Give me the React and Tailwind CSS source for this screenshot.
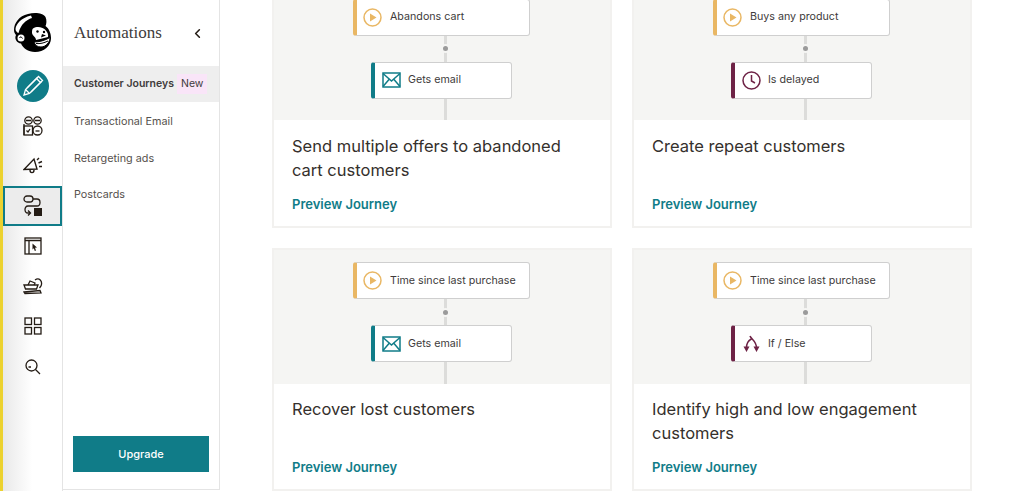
import { ChevronLeft } from 'lucide-react'

const SANS = 'font-[Inter,sans-serif]'

const Freddie = () => (
  <svg width="40" height="42" viewBox="14 12 40 42" aria-hidden>
    <path d="M15 30C15 23 20 16 29 14C36 12 44 13 46.500 17C48 20 47.500 24 46.500 26C50.500 29 52 34 52 38C52 46 45 52 36 52C29 52 24 48 22 43.500C18 43 15 39 17 35C15.500 33 15 32 15 30Z" fill="#000" />
    <path d="M16.500 29C17 24 22 18 32 15.500L33 18C27 20 22 24 19.500 33C18 32.500 16.500 31 16.500 29Z" fill="#fff" />
    <circle cx="22" cy="38" r="3.500" fill="#fff" />
    <path d="M23.500 38.500C22.500 36.500 21 36.500 20.500 38" fill="none" stroke="#000" strokeWidth="1" />
    <path d="M34 28.500C38 26 43 27 46 29.500C48.500 32 49.500 34.500 49 37L37 40C37 37 33.500 36 33 33C33 31 33 29.500 34 28.500Z" fill="#fff" />
    <circle cx="38.500" cy="31.500" r="1.200" fill="#000" />
    <circle cx="45" cy="32" r="1.200" fill="#000" />
    <path d="M43 34L47 35.500L42 37.500Z" fill="#000" />
    <path d="M35 42C40 42 46 40.500 51 37.500C51 42 47 47 42 47C38 47 36 45 35 42Z" fill="#fff" stroke="#000" strokeWidth="1" />
    <path d="M37 43.500C41 44 45 43 49 41" fill="none" stroke="#000" strokeWidth="1" />
  </svg>
)

const Pencil = () => (
  <svg width="24" height="24" viewBox="0 0 24 24" fill="none" stroke="#fff" strokeWidth="1.300" aria-hidden>
    <path d="M3 21L4.500 15.500L17.500 2.500L21.500 6.500L8.500 19.500Z" />
    <path d="M4.500 15.500L8.500 19.500M15.500 4.500L19.500 8.500M6 14L16.500 3.500M10 18L20.500 7.500" />
  </svg>
)

const Audience = () => (
  <svg width="20" height="20" viewBox="0 0 20 20" fill="none" stroke="#241c15" strokeWidth="1.300" aria-hidden>
    <circle cx="5.500" cy="4.500" r="3.700" />
    <circle cx="14.500" cy="4.500" r="3.700" />
    <path d="M3 4.500H8M12 4.500H17" />
    <rect x="1" y="10" width="8.500" height="9" />
    <path d="M1 8V19M3.500 14.500L5 16L7 13" />
    <circle cx="14.500" cy="14.500" r="4.500" />
    <path d="M12.500 15H16.500" />
  </svg>
)

const Megaphone = () => (
  <svg width="20" height="18" viewBox="0 0 20 18" fill="none" stroke="#241c15" strokeWidth="1.400" aria-hidden>
    <path d="M1 12.500L11 2L14 12Z" />
    <path d="M7 13C7 16.500 11 16.500 11 13" />
    <path d="M14 3L16 1M15.500 6L19 4.500M16 9.500L19 9.500" />
  </svg>
)

const JourneyIcon = () => (
  <svg width="20" height="22" viewBox="0 0 20 22" fill="none" stroke="#241c15" strokeWidth="1.300" aria-hidden>
    <rect x="1" y="1" width="9" height="6" rx="3" />
    <path d="M10 4H14C18 4 18 11 14 11H5C1 11 1 18 5 18H7" />
    <path d="M5 15.500L7.500 18L5 20.500" />
    <rect x="11" y="13" width="8" height="8" fill="#241c15" stroke="none" />
  </svg>
)

const Website = () => (
  <svg width="18" height="18" viewBox="0 0 18 18" fill="none" stroke="#241c15" strokeWidth="1.300" aria-hidden>
    <rect x="1" y="1" width="16" height="16" />
    <path d="M1 3.500H17M5 3.500V17" />
    <path d="M8.500 6.500L13 10.500L11 10.800L12 13.500L10.800 14L9.800 11.300L8.500 12.500Z" fill="#241c15" stroke="none" />
  </svg>
)

const Bowl = () => (
  <svg width="20" height="18" viewBox="0 0 20 18" fill="none" stroke="#241c15" strokeWidth="1.300" aria-hidden>
    <path d="M1 8H15L13.500 12H2.500Z" />
    <path d="M1 15L17 13.500L18 16L2 16.500Z" />
    <path d="M5 8L7 4L12 6L11 8" />
    <path d="M12 3C16 0 20 4 18 9L16.500 11" />
  </svg>
)

const Grid = () => (
  <svg width="18" height="18" viewBox="0 0 18 18" fill="none" stroke="#241c15" strokeWidth="1.300" aria-hidden>
    <rect x="1" y="1" width="6.500" height="6.500" />
    <rect x="10.500" y="1" width="6.500" height="6.500" />
    <rect x="1" y="10.500" width="6.500" height="6.500" />
    <rect x="10.500" y="10.500" width="6.500" height="6.500" />
  </svg>
)

const Search = () => (
  <svg width="16" height="16" viewBox="0 0 16 16" className="mt-[1px]" fill="none" stroke="#241c15" strokeWidth="1.300" aria-hidden>
    <circle cx="6.500" cy="6.500" r="5.500" />
    <path d="M10.500 10.500L15 15M3.500 8H6" />
  </svg>
)

const Play = () => (
  <svg width="19" height="19" viewBox="0 0 19 19" fill="none" aria-hidden>
    <circle cx="9.500" cy="9.500" r="8.500" stroke="#e9b764" strokeWidth="1.500" />
    <path d="M7 5.500L13.500 9.500L7 13.500Z" fill="#e9b764" />
  </svg>
)

const Mail = () => (
  <svg width="19" height="16" viewBox="0 0 19 16" fill="none" stroke="#107c88" strokeWidth="1.500" aria-hidden>
    <rect x="1" y="1" width="17" height="14" />
    <path d="M1 1.500L9.500 9L18 1.500M1 14.500L7 7.500M18 14.500L12 7.500" />
  </svg>
)

const Clock = () => (
  <svg width="19" height="19" viewBox="0 0 19 19" fill="none" stroke="#6e2346" strokeWidth="1.500" aria-hidden>
    <circle cx="9.500" cy="9.500" r="8.500" />
    <path d="M9.500 4V10L13 12" />
  </svg>
)

const Branch = () => (
  <svg width="17" height="18" viewBox="0 0 17 18" fill="none" stroke="#6e2346" strokeWidth="1.500" aria-hidden>
    <path d="M7 1C8 4 13.500 6 13.500 13M9 3.500C5 6 3.500 8 3.500 13" />
    <path d="M0.500 11.500H6.500L3.500 17ZM10.500 11.500H16.500L13.500 17Z" fill="#6e2346" stroke="none" />
  </svg>
)

const RAIL = [
  { id: 'audience', icon: Audience },
  { id: 'campaigns', icon: Megaphone },
  { id: 'journeys', icon: JourneyIcon, active: true },
  { id: 'website', icon: Website },
  { id: 'content', icon: Bowl },
  { id: 'integrations', icon: Grid },
  { id: 'search', icon: Search },
]

const MENU = ['Transactional Email', 'Retargeting ads', 'Postcards']

const CARDS = [
  { trigger: 'Abandons cart', step: 'Gets email', icon: Mail, tone: 'border-l-[#107c88]', title: 'Send multiple offers to abandoned cart customers' },
  { trigger: 'Buys any product', step: 'Is delayed', icon: Clock, tone: 'border-l-[#6e2346]', title: 'Create repeat customers' },
  { trigger: 'Time since last purchase', step: 'Gets email', icon: Mail, tone: 'border-l-[#107c88]', title: 'Recover lost customers' },
  { trigger: 'Time since last purchase', step: 'If / Else', icon: Branch, tone: 'border-l-[#6e2346]', title: 'Identify high and low engagement customers' },
]

function Card({ trigger, step, icon: Icon, tone, title }) {
  return (
    <div className="border-2 border-[#f2f1ef] bg-white h-[243px]">
      <div className="h-[133.500px] bg-[#f5f5f3] flex flex-col items-center pt-[12px]">
        <div className="w-[177px] h-[37px] mr-[1px] shrink-0 flex items-center gap-[8px] pl-[6px] bg-white rounded-[3px] border border-[#cfcfcf] border-l-4 border-l-[#e9b764] text-[10.700px] text-[#403b3b]">
          <Play />
          <span className="pt-[1px]">{trigger}</span>
        </div>
        <div className="relative w-[3px] h-[26px] shrink-0 ml-[6px] bg-[#dcdcda] flex items-center justify-center">
          <span className="absolute w-[5px] h-[5px] rounded-full bg-[#9a9a9a] ring-2 ring-[#f5f5f3]" />
        </div>
        <div className={`w-[141px] h-[37px] mr-[1px] shrink-0 flex items-center gap-[7px] pl-[7px] bg-white rounded-[3px] border border-[#cfcfcf] border-l-4 ${tone} text-[10.700px] text-[#403b3b]`}>
          <span className="w-[19px] flex justify-center"><Icon /></span>
          <span className="pt-[1px]">{step}</span>
        </div>
        <div className="w-[3px] flex-1 ml-[6px] bg-[#dcdcda]" />
      </div>
      <div className="px-[18px] pt-[13.500px]">
        <h3 className="h-[48px] text-[16.500px] leading-[24px] text-[#35302c] font-normal">{title}</h3>
        <a className="block mt-[13px] text-[13px] leading-[18px] font-semibold text-[#107c88]">Preview Journey</a>
      </div>
    </div>
  )
}

export default function App() {
  return (
    <div className={`flex h-[491px] w-[1024px] overflow-hidden bg-white ${SANS}`}>
      <div className="w-[3px] shrink-0 bg-[#ecd22f]" />

      {/* Rail */}
      <aside className="w-[60px] shrink-0 border-r border-[#e4e4e4] bg-gradient-to-r from-[#e9e9e9] via-white to-white flex flex-col items-center">
        <div className="h-[66px] w-full flex items-center justify-center"><Freddie /></div>
        <div className="h-[40px] w-full flex items-center justify-center">
          <div className="w-[32px] h-[32px] rounded-full bg-[#107c88] flex items-center justify-center"><Pencil /></div>
        </div>
        {RAIL.map(({ id, icon: Icon, active }) => (
          <div
            key={id}
            className={`h-[40px] w-full flex items-center justify-center ${active ? 'border-2 border-[#107c88] bg-[#ececec]' : ''}`}
          >
            <Icon />
          </div>
        ))}
      </aside>

      {/* Automations menu */}
      <nav className="w-[157px] h-[490px] shrink-0 border-r border-b border-[#e4e4e4] flex flex-col">
        <div className="h-[66px] flex items-center justify-between pl-[11px] pr-[14px]">
          <span className="font-['Liberation_Serif',serif] text-[17px] text-[#403b3b]">Automations</span>
          <ChevronLeft className="w-[15px] h-[15px] text-[#241c15]" strokeWidth={2.500} />
        </div>
        <div className="h-[36px] mb-[2px] bg-[#eeeeee] flex items-center pl-[11px] text-[10.500px] font-semibold text-[#403b3b] whitespace-nowrap">
          Customer Journeys
          <span className="ml-[3px] px-[4px] h-[20px] leading-[20px] bg-[#f9e5f8] font-normal">New</span>
        </div>
        {MENU.map((m) => (
          <div key={m} className="h-[36.500px] flex items-center pl-[11px] text-[10.800px] text-[#56514d]">{m}</div>
        ))}
        <button className="mt-auto mb-[17px] mx-[10px] h-[36px] bg-[#107c88] text-white text-[11px] font-medium">Upgrade</button>
      </nav>

      {/* Journeys */}
      <main className="flex-1 min-w-0 pl-[52px]">
        <div className="grid grid-cols-[340px_340px] gap-x-[20px] gap-y-[20.500px] -mt-[15.500px]">
          {CARDS.map((c) => <Card key={c.title} {...c} />)}
        </div>
      </main>
    </div>
  )
}
